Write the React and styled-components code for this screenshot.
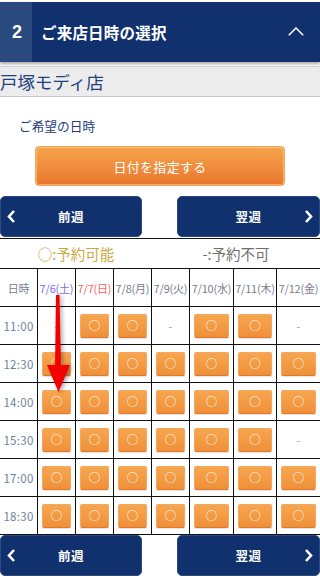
import React from "react";
import styled, { createGlobalStyle } from "styled-components";

const GlobalStyle = createGlobalStyle`
  * { box-sizing: border-box; }
  body {
    margin: 0;
    background: #fff;
    font-family: "Noto Sans CJK JP", "Noto Sans", sans-serif;
  }
`;

const days = [
  { label: "7/6(土)", color: "#7b6cf0" },
  { label: "7/7(日)", color: "#f5665a" },
  { label: "7/8(月)" },
  { label: "7/9(火)" },
  { label: "7/10(水)" },
  { label: "7/11(木)" },
  { label: "7/12(金)" },
];

// 1 = 予約可能, 0 = 予約不可
const slots = [
  { time: "11:00", open: [0, 1, 1, 0, 1, 1, 0] },
  { time: "12:30", open: [1, 1, 1, 1, 1, 1, 1] },
  { time: "14:00", open: [1, 1, 1, 1, 1, 1, 1] },
  { time: "15:30", open: [1, 1, 1, 1, 1, 1, 0] },
  { time: "17:00", open: [1, 1, 1, 1, 1, 1, 1] },
  { time: "18:30", open: [1, 1, 1, 1, 1, 1, 1] },
];

const ChevronLeft = () => (
  <svg width="9" height="13" viewBox="0 0 9 13">
    <polyline points="7,1 2,6.5 7,12" fill="none" stroke="#fff" strokeWidth="2.6" />
  </svg>
);

const ChevronRight = () => (
  <svg width="9" height="13" viewBox="0 0 9 13">
    <polyline points="2,1 7,6.5 2,12" fill="none" stroke="#fff" strokeWidth="2.6" />
  </svg>
);

const WeekNav = ({ top }) => (
  <NavRow $top={top}>
    <NavButton>
      <NavIcon $side="left">
        <ChevronLeft />
      </NavIcon>
      前週
    </NavButton>
    <NavButton>
      翌週
      <NavIcon $side="right">
        <ChevronRight />
      </NavIcon>
    </NavButton>
  </NavRow>
);

const App = () => {
  return (
    <Page>
      <GlobalStyle />
      <Header>
        <StepNo>2</StepNo>
        <HeaderTitle>ご来店日時の選択</HeaderTitle>
        <Toggle>
          <svg width="16" height="9" viewBox="0 0 16 9">
            <polyline points="0.8,8.2 8,1 15.2,8.2" fill="none" stroke="#fff" strokeWidth="1.5" />
          </svg>
        </Toggle>
      </Header>

      <ShopBar>戸塚モディ店</ShopBar>

      <Label>ご希望の日時</Label>
      <DateButton>日付を指定する</DateButton>

      <WeekNav top="10px" />

      <Legend>
        <LegendItem $color="#cda93f">○:予約可能</LegendItem>
        <LegendItem $color="#6f6f6f">-:予約不可</LegendItem>
      </Legend>

      <TableWrap>
        <Grid>
          <HeadCell>日時</HeadCell>
          {days.map((d) => (
            <HeadCell key={d.label} $color={d.color}>
              {d.label}
            </HeadCell>
          ))}
          {slots.map((s) => (
            <React.Fragment key={s.time}>
              <TimeCell>{s.time}</TimeCell>
              {s.open.map((o, i) => (
                <Cell key={i}>
                  {o ? <SlotButton>○</SlotButton> : <Closed>-</Closed>}
                </Cell>
              ))}
            </React.Fragment>
          ))}
        </Grid>
        <Arrow width="40" height="110" viewBox="0 0 40 110">
          <polygon points="16,7 19.5,7 21,80 15,80" fill="#f40000" />
          <polygon points="7,77 30,77 18.5,104" fill="#f40000" />
        </Arrow>
      </TableWrap>

      <WeekNav />
    </Page>
  );
};

const Page = styled.div`
  width: 320px;
  padding-top: 2px;
`;

const Header = styled.div`
  display: flex;
  align-items: center;
  height: 60px;
  background: #10316d;
  box-shadow: 0 2px 3px rgba(0, 0, 0, 0.35);
  color: #fff;
`;

const StepNo = styled.div`
  width: 32px;
  height: 100%;
  display: flex;
  align-items: center;
  justify-content: center;
  background: #2a4a7f;
  font-family: "Liberation Sans", Arial, sans-serif;
  font-weight: 700;
  font-size: 18px;
  padding-left: 2px;
`;

const HeaderTitle = styled.div`
  flex: 1;
  padding-left: 9px;
  font-weight: 700;
  font-size: 15.5px;
  letter-spacing: 0.2px;
`;

const Toggle = styled.div`
  width: 40px;
  display: flex;
  justify-content: center;
  padding-right: 8px;
  padding-bottom: 2px;
`;

const ShopBar = styled.div`
  margin-top: 4px;
  height: 31px;
  background: #ececec;
  border-top: 1px solid #cfd3da;
  border-bottom: 1px solid #c3c8d0;
  color: #22407e;
  font-size: 17.5px;
  line-height: 29px;
  white-space: nowrap;
`;

const Label = styled.div`
  margin-top: 19px;
  padding-left: 19px;
  font-size: 12.7px;
  line-height: 20px;
  color: #1f3b7a;
`;

const DateButton = styled.button`
  display: block;
  margin: 10px 0 0 35px;
  width: 250px;
  height: 40px;
  border: 1px solid #f0a259;
  border-radius: 4px;
  background: linear-gradient(#f6a54c, #e9772f);
  box-shadow: inset 0 0 0 1px rgba(255, 214, 160, 0.55);
  color: #fff;
  font-family: inherit;
  font-size: 13px;
  letter-spacing: 0.3px;
  padding: 0;
`;

const NavRow = styled.div`
  display: flex;
  justify-content: space-between;
  margin-top: ${(p) => p.$top || "0"};
`;

const NavButton = styled.div`
  position: relative;
  width: 142px;
  height: 41px;
  flex: 0 0 auto;
  display: flex;
  align-items: center;
  justify-content: center;
  background: #10316d;
  border: 1px solid #2b4a80;
  border-radius: 5px;
  color: #fff;
  font-weight: 700;
  font-size: 12.5px;
  letter-spacing: 0.5px;
  &:last-child {
    width: 143px;
  }
`;

const NavIcon = styled.span`
  position: absolute;
  top: 13px;
  ${(p) => (p.$side === "left" ? "left: 6px;" : "right: 6px;")}
  display: flex;
`;

const Legend = styled.div`
  display: grid;
  grid-template-columns: 1fr 1fr;
  margin-top: 1px;
  border-top: 1px solid #111;
  height: 30px;
  align-items: center;
`;

const LegendItem = styled.div`
  text-align: center;
  padding-right: 8px;
  font-size: 14.5px;
  color: ${(p) => p.$color};
`;

const TableWrap = styled.div`
  position: relative;
`;

const Grid = styled.div`
  display: grid;
  grid-template-columns: 37px 38px 38px 38px 38px 44px 43px 44px;
  grid-auto-rows: 38px;
  border-bottom: 1px solid #111;
`;

const BaseCell = styled.div`
  display: flex;
  align-items: center;
  justify-content: center;
  border-top: 1px solid #111;
  border-left: 1px solid #111;
  white-space: nowrap;
  &:nth-child(8n + 1) {
    border-left: none;
  }
`;

const HeadCell = styled(BaseCell)`
  font-size: 11px;
  color: ${(p) => p.$color || "#7b7d8c"};
  letter-spacing: -0.2px;
`;

const TimeCell = styled(BaseCell)`
  font-size: 11.5px;
  color: #6e7f9c;
  letter-spacing: 0.3px;
`;

const Cell = styled(BaseCell)``;

const SlotButton = styled.div`
  width: calc(100% - 8px);
  height: 24px;
  display: flex;
  align-items: center;
  justify-content: center;
  background: linear-gradient(#f7a64e, #ef9039);
  border: 1px solid #f2a862;
  border-bottom-color: #e0792c;
  border-radius: 2px;
  box-shadow: 0 1px 1px rgba(0, 0, 0, 0.12);
  color: #fff;
  font-size: 11.5px;
  line-height: 1;
`;

const Closed = styled.span`
  font-size: 11px;
  color: #a0a0a0;
`;

const Arrow = styled.svg`
  position: absolute;
  left: 40px;
  top: 20px;
  filter: drop-shadow(2px 1px 2px rgba(0, 0, 0, 0.35));
`;

export default App;
